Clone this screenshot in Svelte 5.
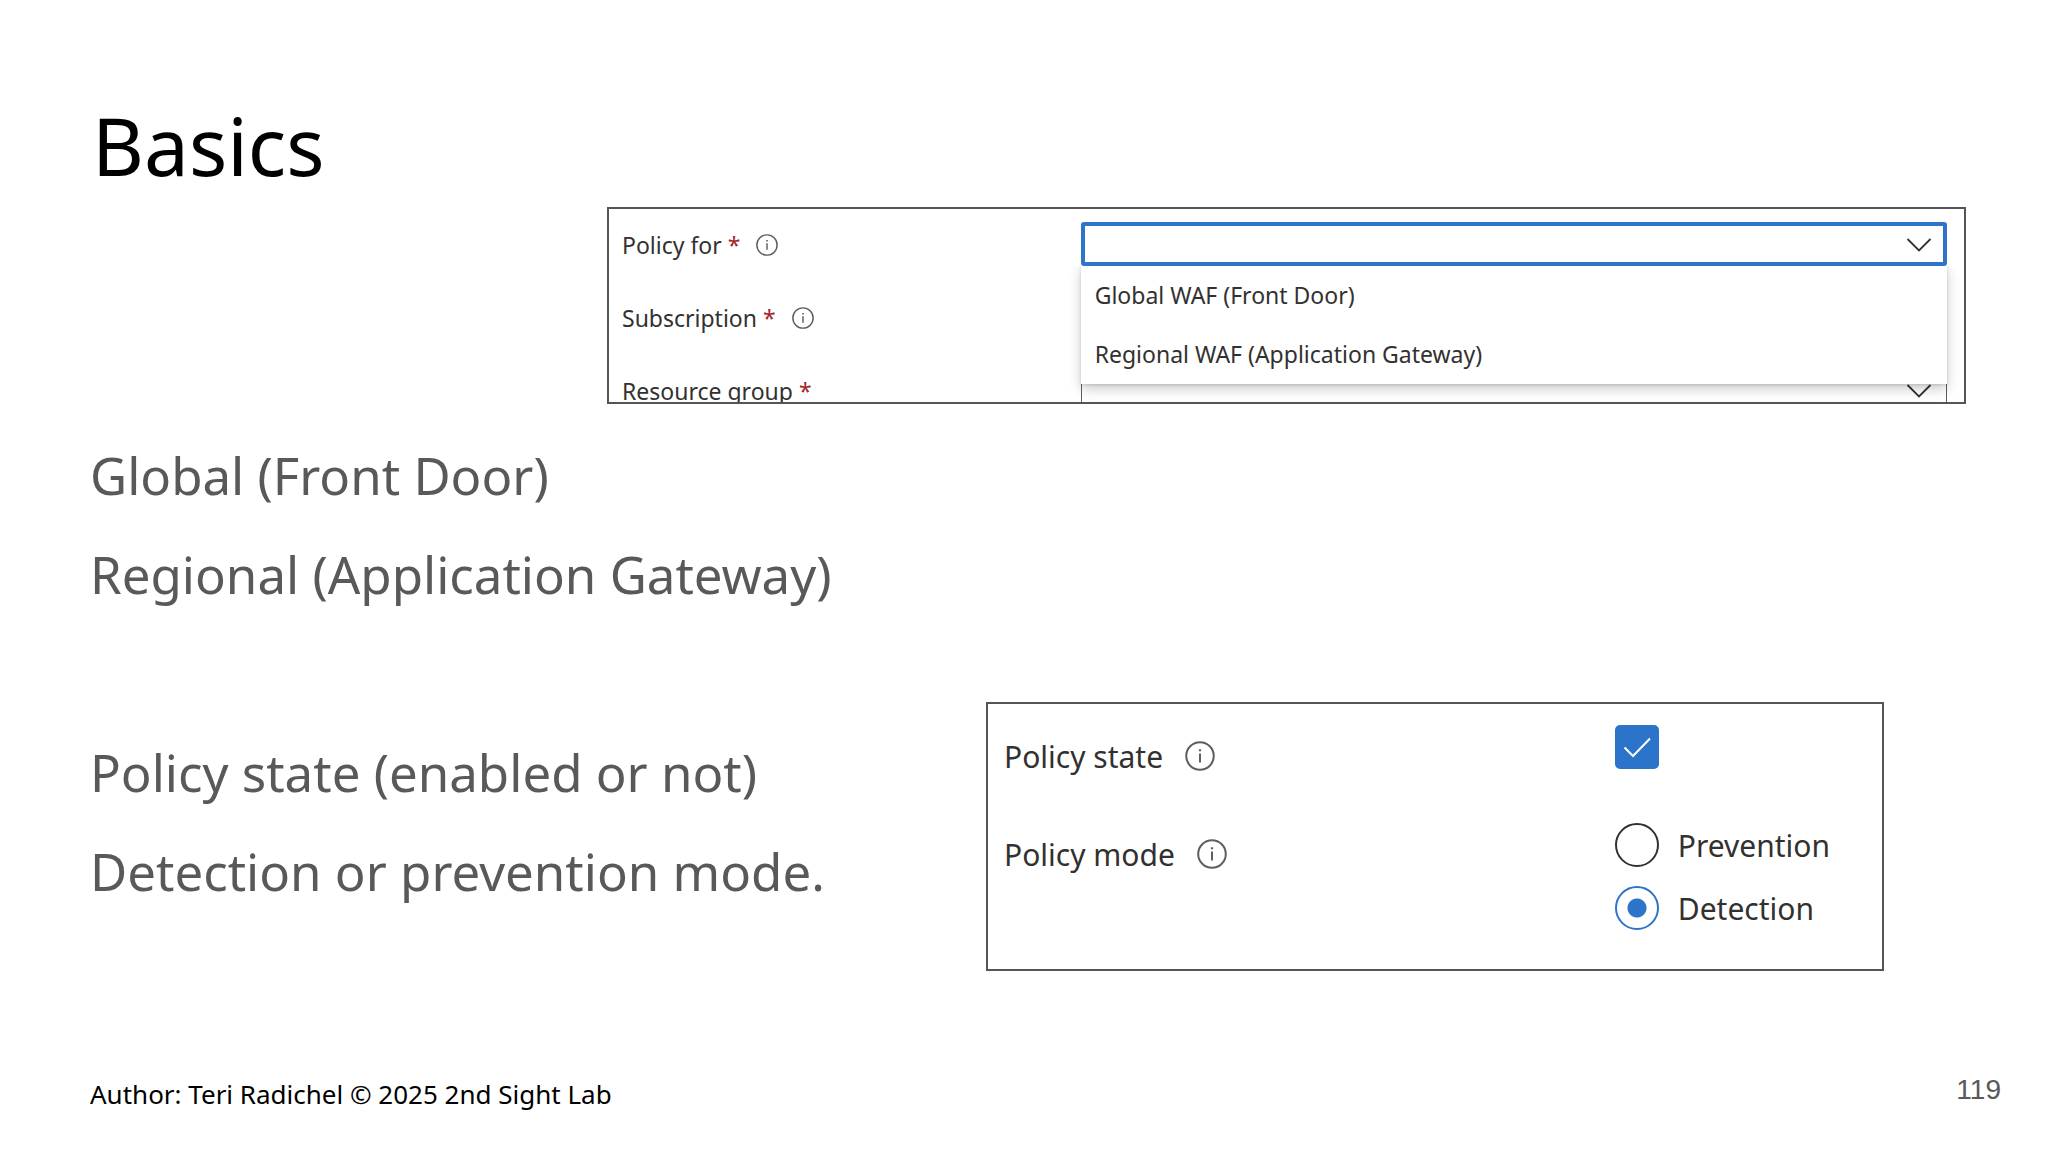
<script lang="ts">
  const targets = [
    { value: 'global',   label: 'Global WAF (Front Door)' },
    { value: 'regional', label: 'Regional WAF (Application Gateway)' },
  ];

  const fields = [
    { id: 'policy-for',     label: 'Policy for',     info: true,  open: true },
    { id: 'subscription',   label: 'Subscription',   info: true,  open: false },
    { id: 'resource-group', label: 'Resource group', info: false, open: false },
  ];

  const modes = ['Prevention', 'Detection'];

  let enabled = $state(true);
  let mode = $state('Detection');
</script>

{#snippet infoIcon(about: string)}
  <button class="info" type="button" aria-label="About {about}">
    <svg viewBox="0 0 30 30" fill="none" stroke="currentColor">
      <circle cx="15" cy="15" r="13.8" stroke-width="2" />
      <path d="M15 12.5V21.5" stroke-width="2" />
      <path d="M15 8.3V10.3" stroke-width="2.2" />
    </svg>
  </button>
{/snippet}

<main class="slide">
  <h1>Basics</h1>

  <form class="panel panel--fields">
    {#each fields as field}
      <div class="field">
        <div class="field__label">
          <label for={field.id}>{field.label}</label>
          <span class="required">*</span>
          {#if field.info}{@render infoIcon(field.label)}{/if}
        </div>
        <div class="dropdown" class:dropdown--open={field.open}>
          <select id={field.id}>
            <option value=""></option>
            {#if field.open}
              {#each targets as target}
                <option value={target.value}>{target.label}</option>
              {/each}
            {/if}
          </select>
          <svg class="chevron" viewBox="0 0 26 14" fill="none" stroke="currentColor" stroke-width="1.8">
            <path d="M1.5 1L13 12.5L24.5 1" />
          </svg>
          {#if field.open}
            <ul class="menu" role="listbox" aria-label={field.label}>
              {#each targets as target}
                <li role="option" aria-selected="false">{target.label}</li>
              {/each}
            </ul>
          {/if}
        </div>
      </div>
    {/each}
  </form>

  <section class="lines">
    <p>Global (Front Door)</p>
    <p>Regional (Application Gateway)</p>
  </section>

  <section class="split">
    <div class="lines lines--side">
      <p>Policy state (enabled or not)</p>
      <p>Detection or prevention mode.</p>
    </div>

    <form class="panel panel--policy">
      <div class="policy__label">
        <label for="policy-state">Policy state</label>
        {@render infoIcon('Policy state')}
      </div>
      <div class="check">
        <input id="policy-state" type="checkbox" bind:checked={enabled} />
        {#if enabled}
          <svg viewBox="0 0 44 44" fill="none" stroke="#fff" stroke-width="2">
            <path d="M9.5 22.5L18 31L35 13.5" />
          </svg>
        {/if}
      </div>

      <div class="policy__label">
        <span id="policy-mode">Policy mode</span>
        {@render infoIcon('Policy mode')}
      </div>
      <div class="radios" role="radiogroup" aria-labelledby="policy-mode">
        {#each modes as item}
          <label class="radio">
            <input type="radio" name="mode" value={item} bind:group={mode} />
            {item}
          </label>
        {/each}
      </div>
    </form>
  </section>

  <footer>
    <span>Author: Teri Radichel © 2025 2nd Sight Lab</span>
    <span class="page">119</span>
  </footer>
</main>

<style>
  :global(body) { margin: 0; background: #fff; }

  .slide {
    box-sizing: border-box;
    min-height: 100vh;
    padding: 97px 82px 40px 90px;
    display: flex; flex-direction: column;
    font-family: "Noto Sans", sans-serif;
    color: #000;
  }
  h1 {
    margin: 0 0 14px;
    padding-left: 2px;
    font-size: 80px; line-height: 96px; font-weight: 400;
  }

  .panel {
    box-sizing: border-box;
    border: 2px solid #555;
    color: #323130;
  }

  /* third row is cut off by the frame */
  .panel--fields {
    height: 197px; overflow: hidden;
    margin-left: 517px;
    padding: 13px 17px 0 13px;
    display: flex; flex-direction: column; gap: 30px;
    font-size: 23px;
  }
  .field {
    flex: none;
    display: grid; grid-template-columns: 9fr 17fr;
    align-items: center;
  }
  .field__label { display: flex; align-items: center; padding-top: 2px; }
  .required { margin-left: 6px; color: #a4262c; }
  .info {
    flex: none;
    width: 22px; height: 22px;
    margin-left: 16px; padding: 0;
    border: none; background: none;
    color: #605e5c;
  }
  .info svg { display: block; width: 100%; height: 100%; }

  .dropdown { position: relative; }
  .dropdown select {
    display: block; box-sizing: border-box;
    width: 100%; height: 43px;
    padding: 0 56px 0 14px;
    border: 1px solid #605e5c; border-radius: 3px;
    background: #fff; color: inherit;
    font: inherit;
    appearance: none; outline: none;
  }
  .dropdown--open select { height: 44px; margin-bottom: -1px; border: 4px solid #2f74c8; }
  .chevron {
    position: absolute; right: 15px; top: 16px;
    width: 26px; height: 14px;
    pointer-events: none;
  }
  .menu {
    position: absolute; top: 100%; left: 0; right: 0; z-index: 1;
    margin: 0; padding: 1px 0 0;
    list-style: none;
    background: #fff;
    box-shadow: 0 5px 12px rgba(0,0,0,0.2), 0 1px 3px rgba(0,0,0,0.14);
    clip-path: inset(1px -40px -40px -40px);
  }
  .menu li { padding: 0 14px; line-height: 59px; }

  .lines {
    margin-top: 22px;
    font-size: 51px; line-height: 99px;
    color: #595959;
  }
  .lines p { margin: 0; }
  .lines--side { margin-top: 21px; }

  .split {
    margin-top: 78px;
    display: grid; grid-template-columns: 896fr 898fr;
    padding-right: 82px;
    align-items: start;
  }
  .panel--policy {
    padding: 21px 0 39px 16px;
    display: grid; grid-template-columns: 16fr 7fr;
    row-gap: 36px;
    font-size: 30px;
  }
  .policy__label {
    display: flex; align-items: center;
    height: 62px;
  }
  .policy__label .info { width: 30px; height: 30px; margin-left: 22px; }

  .check { position: relative; width: 44px; height: 44px; }
  .check input {
    display: block; width: 44px; height: 44px; margin: 0;
    border: 2px solid #323130; border-radius: 5px;
    appearance: none;
  }
  .check input:checked { border-color: #2b74ca; background: #2b74ca; }
  .check svg { position: absolute; inset: 0; pointer-events: none; }

  .radios { display: flex; flex-direction: column; gap: 19px; }
  .radio {
    display: flex; align-items: center; gap: 19px;
    height: 44px;
  }
  .radio input {
    flex: none; box-sizing: border-box;
    width: 44px; height: 44px; margin: 0;
    border: 2px solid #323130; border-radius: 50%;
    appearance: none;
  }
  .radio input:checked {
    border-color: #2b74ca;
    background: radial-gradient(circle, #2b74ca 9px, transparent 10px);
  }

  footer {
    margin-top: auto; margin-right: -35px;
    display: flex; justify-content: space-between; align-items: flex-start;
    font-size: 26px; line-height: 36px;
  }
  .page {
    font-family: "Liberation Sans", Arial, sans-serif;
    font-size: 28px; line-height: 28px;
    color: #595959;
  }
</style>
